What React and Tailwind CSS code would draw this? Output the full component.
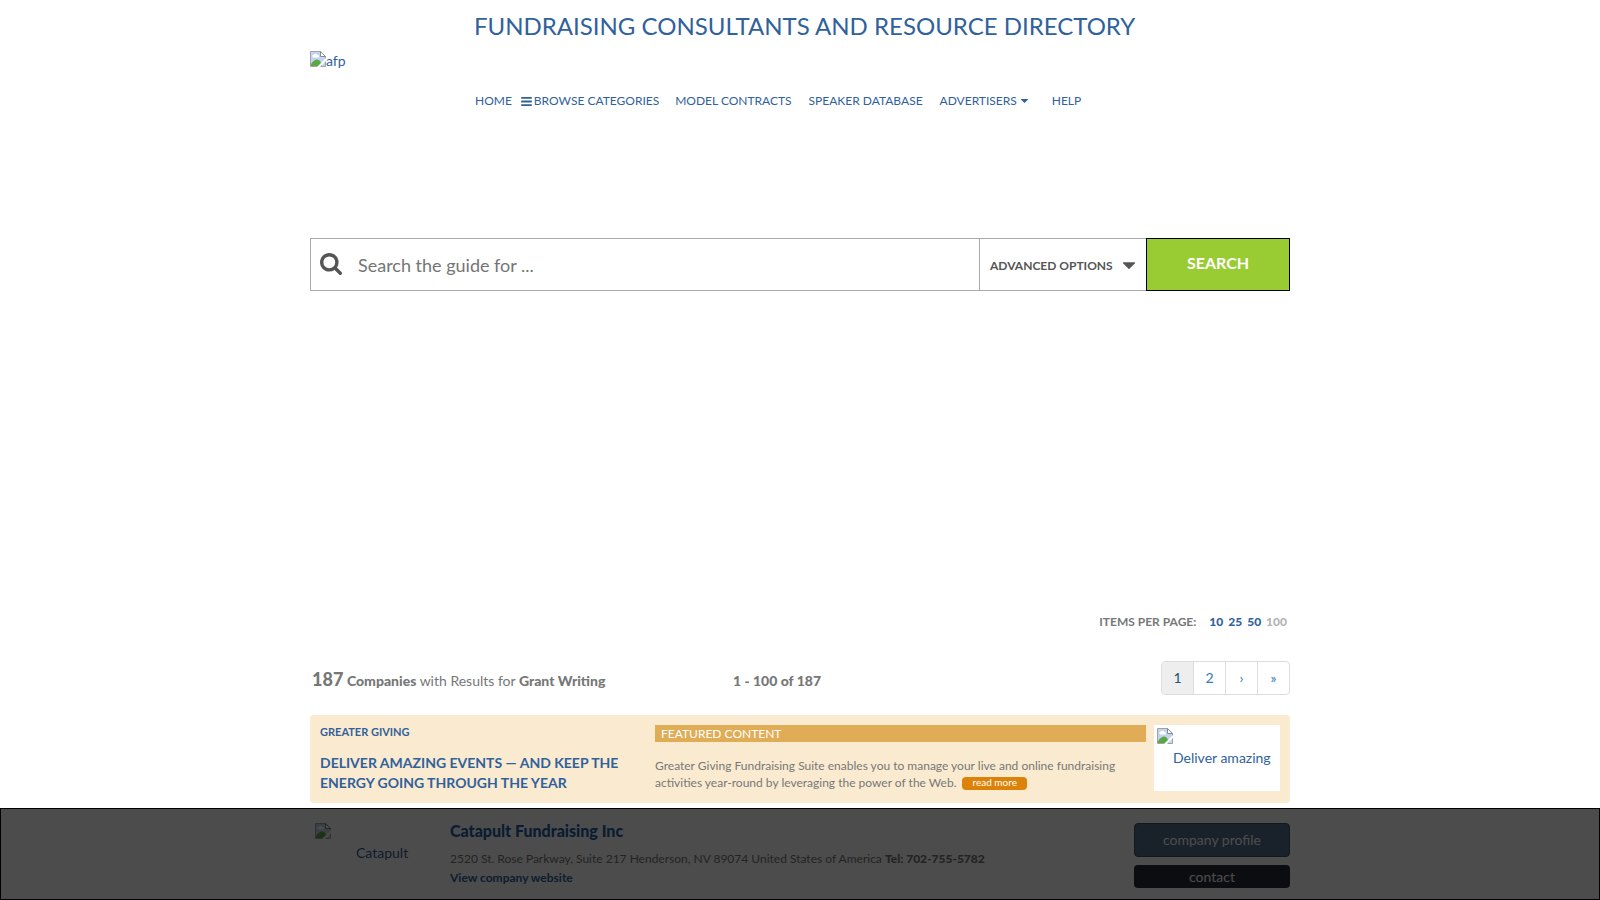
import React, { useState } from "react";

const pageSizes = [10, 25, 50, 100];
const pages = ["1", "2", "›", "»"];

const BrokenImage = ({ className = "" }) => (
  <svg className={`size-4 shrink-0 ${className}`} viewBox="0 0 16 16" aria-hidden="true">
    <path d="M.5.5h10l5 5v10H.5z" fill="#c3d4f2" stroke="#a3a3a3" />
    <path d="M2.5 5.5a1.5 1.5 0 0 1 1.5-2 2 2 0 0 1 3.500 .5 1.200 1.200 0 0 1 .5 2.500h-5z" fill="#fff" />
    <path d="M1 15v-2c2-3 4-4.500 6-4.500 2 0 4 2 5 6.500z" fill="#5aa845" />
    <path d="M16 7v3l-6 6H7z" fill="#fff" />
    <path d="M10.500.5v5h5z" fill="#fff" stroke="#8a8a8a" />
  </svg>
);

const Caret = ({ className }) => (
  <svg className={className} viewBox="384 640 1024 576" fill="currentColor" aria-hidden="true">
    <path d="M1408 704q0 26-19 45l-448 448q-19 19-45 19t-45-19l-448-448q-19-19-19-45t19-45 45-19h896q26 0 45 19t19 45z" />
  </svg>
);

const Header = () => (
  <header className="flex h-[238px] text-[#31619c]">
    <a href="#" className="mt-[51px] flex h-5 w-[164px] shrink-0 items-start text-sm">
      <BrokenImage />
      afp
    </a>
    <div>
      <h1 className="pt-[11px] text-2xl leading-[30px]">
        FUNDRAISING CONSULTANTS AND RESOURCE DIRECTORY
      </h1>
      <nav className="mt-[51px] flex items-center pl-px text-xs leading-[18px]">
        <a href="#">HOME</a>
        <a href="#" className="ml-[9px] flex items-center gap-0.5">
          <svg className="h-[9px] w-[11px]" viewBox="128 256 1536 1280" fill="currentColor" aria-hidden="true">
            <rect x="128" y="256" width="1536" height="256" rx="64" />
            <rect x="128" y="768" width="1536" height="256" rx="64" />
            <rect x="128" y="1280" width="1536" height="256" rx="64" />
          </svg>
          BROWSE CATEGORIES
        </a>
        <a href="#" className="ml-4">MODEL CONTRACTS</a>
        <a href="#" className="ml-[17px]">SPEAKER DATABASE</a>
        <a href="#" className="ml-[17px] flex items-center gap-1">
          ADVERTISERS
          <Caret className="h-1 w-[7px]" />
        </a>
        <a href="#" className="ml-6">HELP</a>
      </nav>
    </div>
  </header>
);

const SearchBar = () => {
  const [query, setQuery] = useState("");

  return (
    <form className="flex h-[53px]" onSubmit={(ev) => ev.preventDefault()}>
      <div className="flex flex-1 items-center border border-r-0 border-[#aaa] pl-[9px]">
        <svg className="mb-[2px] size-[22px] shrink-0 text-[#555]" viewBox="0 128 1664 1664" fill="currentColor" aria-hidden="true">
          <path d="M1152 832q0-185-131.5-316.5t-316.5-131.5-316.5 131.5-131.5 316.5 131.5 316.5 316.5 131.5 316.5-131.5 131.5-316.5zm512 832q0 52-38 90t-90 38q-54 0-90-38l-343-342q-179 124-399 124-143 0-273.5-55.5t-225-150-150-225-55.5-273.5 55.5-273.5 150-225 225-150 273.5-55.5 273.5 55.5 225 150 150 225 55.5 273.5q0 220-124 399l343 343q37 37 37 90z" />
        </svg>
        <input
          type="text"
          aria-label="Search the guide"
          placeholder="Search the guide for ..."
          className="h-full min-w-0 flex-1 pl-4 text-lg outline-none placeholder:text-[#757575]"
          value={query}
          onChange={(ev) => setQuery(ev.target.value)}
        />
      </div>
      <button
        type="button"
        className="flex w-[167px] items-center gap-[10px] border border-r-0 border-[#aaa] pt-[2px] pl-[10px] text-xs font-bold text-[#555]"
      >
        ADVANCED OPTIONS
        <Caret className="h-[7px] w-3" />
      </button>
      <button type="submit" className="w-36 border border-black bg-[#9c3] pb-1 font-bold text-white">
        SEARCH
      </button>
    </form>
  );
};

const ResultsBar = () => (
  <div className="mt-[321px]">
    <div className="flex h-5 items-center justify-end pr-[3px] text-xs font-bold">
      ITEMS PER PAGE:
      <div className="ml-[13px] flex gap-[5px] font-black">
        {pageSizes.map((size) =>
          size === 100 ? (
            <span key={size} className="text-[#b4b4b4]">{size}</span>
          ) : (
            <a key={size} href="#" className="text-[#31619c]">{size}</a>
          )
        )}
      </div>
    </div>
    <div className="mt-[29px] flex h-[34px] items-center text-sm">
      <p className="w-[423px] pt-[2px] pl-[2px] leading-6">
        <b className="text-lg font-black">187</b> <b className="font-black">Companies</b> with Results for{" "}
        <b className="font-black">Grant Writing</b>
      </p>
      <b className="pt-[6px] font-black">1 - 100 of 187</b>
      <nav className="ml-auto flex h-full overflow-hidden rounded border border-[#ddd]" aria-label="Pages">
        {pages.map((page, i) => (
          <a
            key={page}
            href="#"
            className={
              i === 0
                ? "flex w-[31px] items-center justify-center bg-[#eee] text-[#23527c]"
                : "flex w-8 items-center justify-center border-l border-[#ddd] text-[#337ab7]"
            }
          >
            {page}
          </a>
        ))}
      </nav>
    </div>
  </div>
);

const Featured = () => (
  <section className="mt-5 flex h-[88px] rounded bg-[#faebd0] p-[10px]">
    <div className="w-[335px] shrink-0 font-bold text-[#31619c]">
      <a href="#" className="block text-[11px] leading-[14px]">GREATER GIVING</a>
      <h2 className="mt-[14px] w-[310px] text-sm leading-5">
        <a href="#">DELIVER AMAZING EVENTS — AND KEEP THE ENERGY GOING THROUGH THE YEAR</a>
      </h2>
    </div>
    <div className="flex-1 text-xs leading-[17px]">
      <div className="bg-[#e0ac56] pl-[6px] text-white">FEATURED CONTENT</div>
      <p className="mt-[15px]">
        Greater Giving Fundraising Suite enables you to manage your live and online fundraising
        activities year-round by leveraging the power of the Web.
        <a href="#" className="ml-[6px] inline-block h-[13px] rounded bg-[#dd8208] px-[10px] align-middle text-[10px] leading-[10px] text-white">
          read more
        </a>
      </p>
    </div>
    <a href="#" className="ml-2 flex h-[66px] w-[126px] bg-white p-[3px] text-sm text-[#31619c]">
      <BrokenImage />
      <span className="mt-5">Deliver amazing</span>
    </a>
  </section>
);

const Company = () => (
  <section className="mt-5 flex pb-3 text-xs leading-[18px]">
    <a href="#" className="flex w-[140px] shrink-0 pl-[5px] text-sm text-[#31619c]">
      <BrokenImage />
      <span className="mt-5 ml-[25px]">Catapult</span>
    </a>
    <div className="flex-1">
      <h2 className="text-base leading-4 font-black text-[#1f5fa8]">
        <a href="#">Catapult Fundraising Inc</a>
      </h2>
      <p className="mt-[11px]">
        2520 St. Rose Parkway, Suite 217 Henderson, NV 89074 United States of America{" "}
        <b className="font-black">Tel: 702-755-5782</b>
      </p>
      <a href="#" className="mt-px block font-bold text-[#31619c]">View company website</a>
    </div>
    <div className="flex w-[156px] flex-col gap-2 text-sm text-white">
      <button className="h-[34px] rounded border border-[#3c5064] bg-[#54708f]">company profile</button>
      <button className="h-[23px] rounded bg-[#282d37] leading-[20px]">contact</button>
    </div>
  </section>
);

const App = () => {
  return (
    <div className="font-[Lato,sans-serif] text-[#777]">
      <main className="mx-auto max-w-[980px]">
        <Header />
        <SearchBar />
        <ResultsBar />
        <Featured />
        <Company />
      </main>
      <div className="fixed inset-x-0 bottom-0 h-[92px] border border-black bg-black/70" />
    </div>
  );
};

export default App;
